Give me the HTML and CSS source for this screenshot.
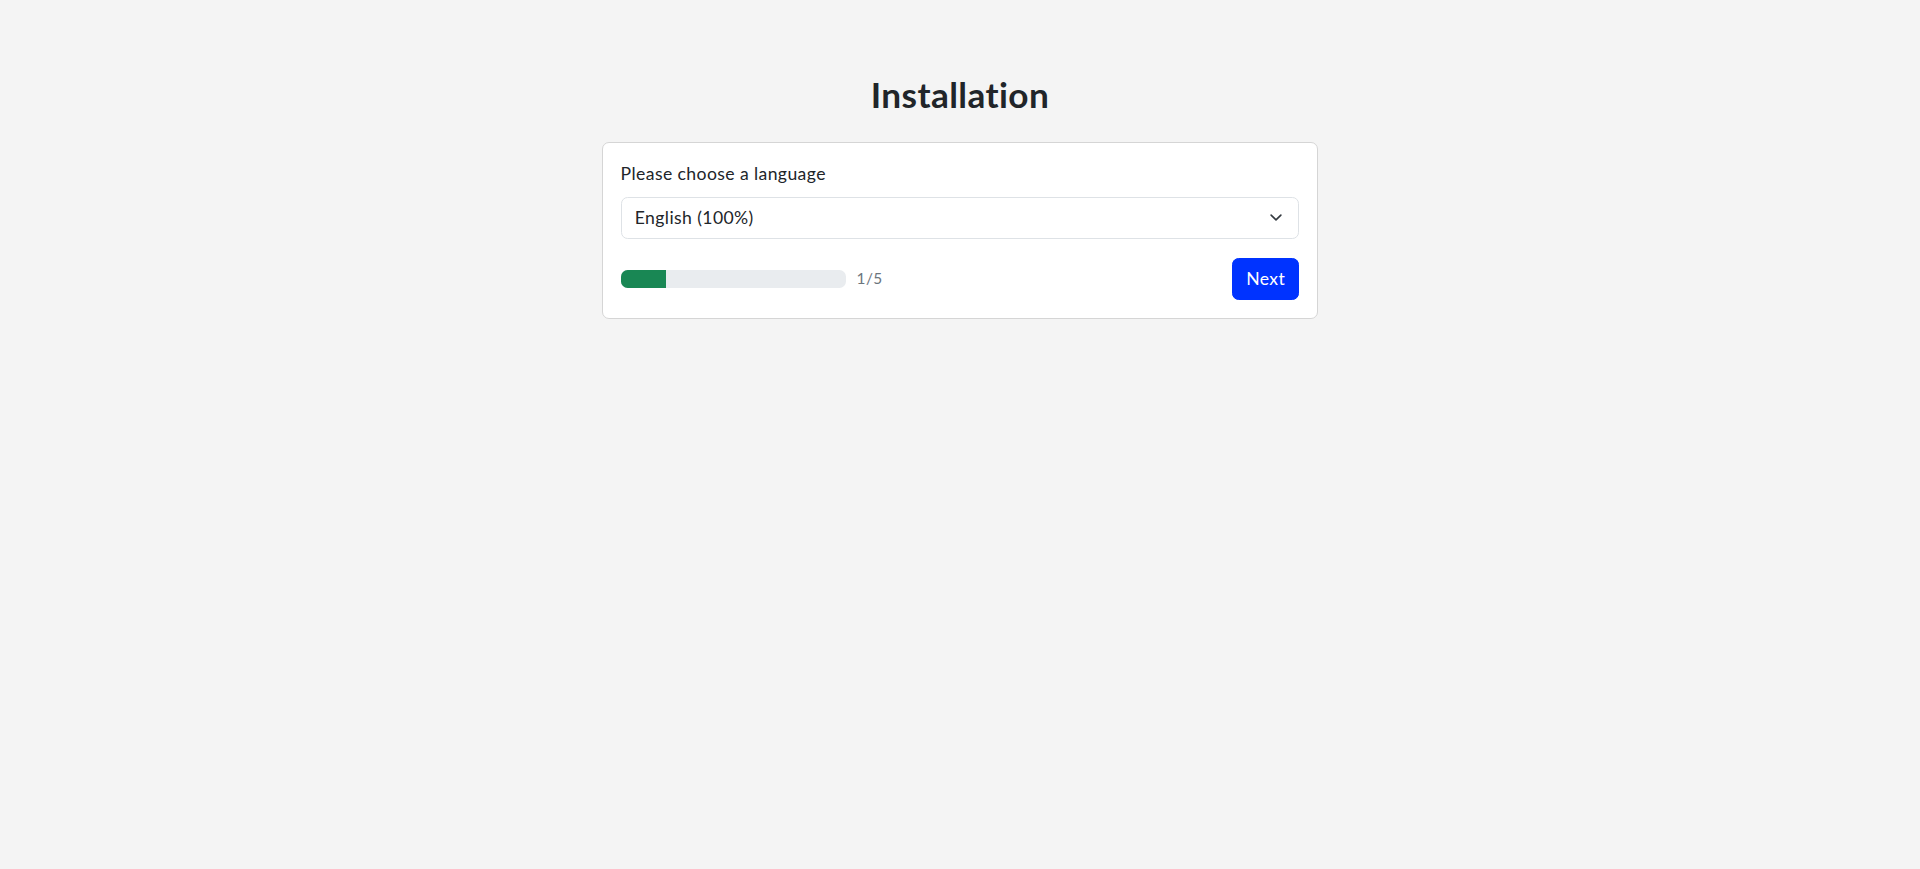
FILE: index.html
```html
<!DOCTYPE html>
<html lang="en">
<head>
    <meta charset="utf-8">
    <title>Installation</title>
    <link rel="stylesheet" href="styles.css">
</head>
<body>
    <div class="content">
        <h1 class="title">Installation</h1>

        <div class="card">
            <label class="label" for="language">Please choose a language</label>

            <div class="select" id="language">
                <span>English (100%)</span>
                <svg class="chevron" width="18" height="13" viewBox="0 0 16 16">
                    <path d="M2 5l6 6 6-6" fill="none" stroke="#343a40" stroke-width="2" stroke-linecap="round" stroke-linejoin="round"/>
                </svg>
            </div>

            <div class="footer">
                <div class="progress">
                    <div class="progress-bar" style="width: 20%"></div>
                </div>
                <span class="step">1/5</span>
                <button class="next">Next</button>
            </div>
        </div>
    </div>
</body>
</html>
```

FILE: styles.css
```css
body {
    margin: 0;
    background-color: #f4f4f4;
    color: #212529;
    font-family: Lato, "Noto Sans", sans-serif;
    font-size: 17.6px;
    line-height: 1.5;
    letter-spacing: 0.4px;
}

.content {
    max-width: 716px;
    margin: 0 auto;
    padding-top: 73px;
}

.title {
    margin: 0 0 27px;
    text-align: center;
    font-size: 35.2px;
    font-weight: 700;
    line-height: 1.2;
}

.card {
    background-color: #fff;
    border: 1px solid #d5d5d5;
    border-radius: 7px;
    padding: 18px 17.6px;
}

.label {
    display: block;
    margin-bottom: 9.5px;
}

.select {
    display: flex;
    align-items: center;
    justify-content: space-between;
    padding: 6.6px 13.2px;
    border: 1px solid #dee2e6;
    border-radius: 6.6px;
}

.chevron {
    display: block;
}

.footer {
    display: flex;
    align-items: center;
    margin-top: 19.5px;
}

.progress {
    width: 225px;
    height: 17.6px;
    background-color: #e9ecef;
    border-radius: 6.6px;
    overflow: hidden;
}

.progress-bar {
    height: 100%;
    background-color: #198754;
}

.step {
    margin-left: 11px;
    color: #6c757d;
    font-size: 15.4px;
}

.next {
    margin-left: auto;
    padding: 6.6px 13.2px;
    border: 1px solid #0033ff;
    border-radius: 6.6px;
    background-color: #0033ff;
    color: #fff;
    font-family: inherit;
    font-size: 17.6px;
    line-height: 1.5;
    letter-spacing: 0.4px;
    cursor: pointer;
}
```
